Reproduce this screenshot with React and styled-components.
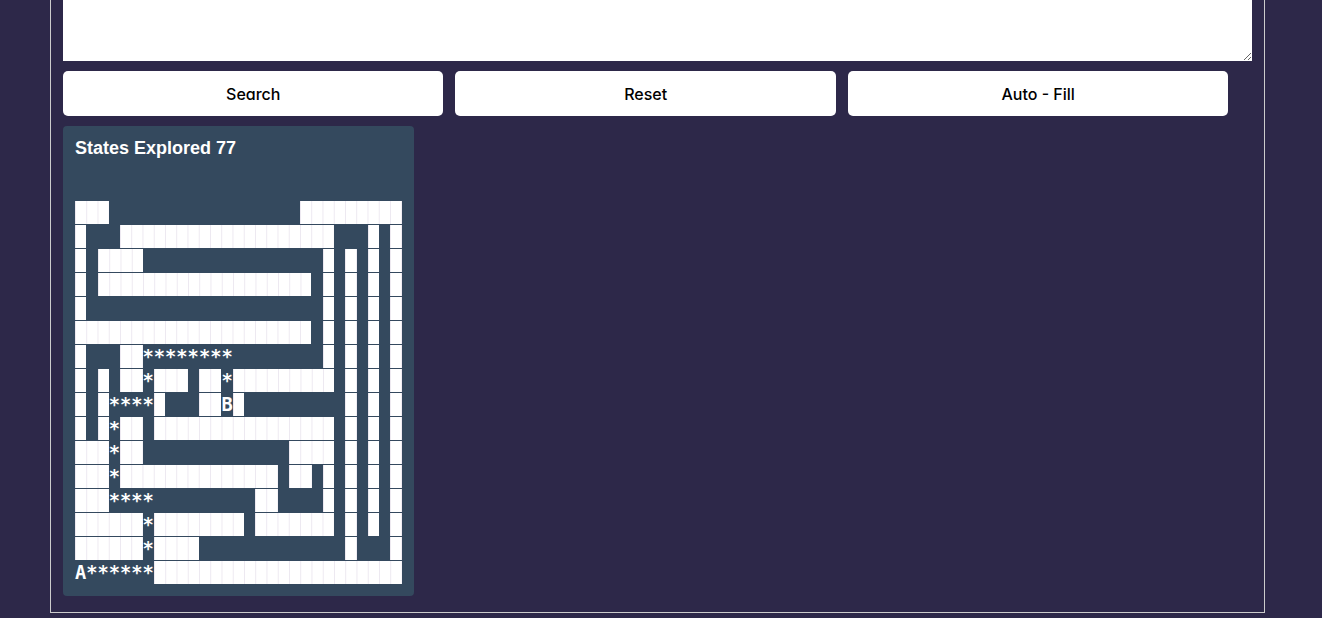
import React from "react";
import styled, { createGlobalStyle } from "styled-components";

const GlobalStyle = createGlobalStyle`
  *, *::before, *::after { box-sizing: border-box; }
  body {
    margin: 0;
    background: #2d2849;
    font-family: "Liberation Sans", Arial, sans-serif;
    font-size: 16px;
  }
`;

const Frame = styled.main`
  margin: 0 57px 0 50px;
  padding: 0 12px 16px;
  border: 1px solid #cccccc;
  border-top: 0;
`;

const MazeInput = styled.textarea`
  display: block;
  width: 100%;
  height: 61px;
  padding: 8px;
  border: 0;
  outline: 0;
  background: #fff;
  color: #000;
  resize: both;
`;

const Toolbar = styled.div`
  display: flex;
  gap: 12px;
  margin: 10px 0;
`;

const ActionButton = styled.button`
  width: 32%;
  height: 45px;
  padding: 0;
  border: 0;
  border-radius: 5px;
  background: #fff;
  color: #000;
  font: 500 16px Inter, sans-serif;
  font-feature-settings: "cv11";
  cursor: pointer;
`;

const ResultPanel = styled.section`
  width: fit-content;
  padding: 12px 12px 11px;
  border-radius: 4px;
  background: #34495e;
  color: #fff;
`;

const ResultTitle = styled.h2`
  margin: 0 0 43px;
  font-size: 18px;
  line-height: 20px;
`;

const Maze = styled.h3`
  margin: 0;
  font-family: "DejaVu Sans Mono", monospace;
  line-height: 24px;
  white-space: pre;
`;

const MazeRow = styled.div`
  height: 24px;
`;

const Wall = styled.span`
  padding: 1px 0;
  background: linear-gradient(90deg, #ece8f0 1px, #fff 1px) 0 0 / 1ch 100%;
  color: transparent;
`;

const rows = [
  "###                 #########",
  "#   ###################   # #",
  "# ####                # # # #",
  "# ################### # # # #",
  "#                     # # # #",
  "##################### # # # #",
  "#   ##********        # # # #",
  "# # ##*### ##*######### # # #",
  "# #****#   ##B#         # # #",
  "# #*## ################ # # #",
  "###*##             #### # # #",
  "###*############## ## # # # #",
  "###****         ##    # # # #",
  "######*######## ####### # # #",
  "######*####             #   #",
  "A******######################",
];

const splitRuns = (row) => row.match(/#+|[^#]+/g);

export default function App() {
  return (
    <>
      <GlobalStyle />
      <Frame>
        <MazeInput aria-label="Maze" />
        <Toolbar>
          <ActionButton type="button">Search</ActionButton>
          <ActionButton type="button">Reset</ActionButton>
          <ActionButton type="button">Auto - Fill</ActionButton>
        </Toolbar>
        <ResultPanel>
          <ResultTitle>States Explored 77</ResultTitle>
          <Maze>
            {rows.map((row, y) => (
              <MazeRow key={y}>
                {splitRuns(row).map((run, i) =>
                  run[0] === "#" ? (
                    <Wall key={i}>{"█".repeat(run.length)}</Wall>
                  ) : (
                    <React.Fragment key={i}>{run}</React.Fragment>
                  )
                )}
              </MazeRow>
            ))}
          </Maze>
        </ResultPanel>
      </Frame>
    </>
  );
}
